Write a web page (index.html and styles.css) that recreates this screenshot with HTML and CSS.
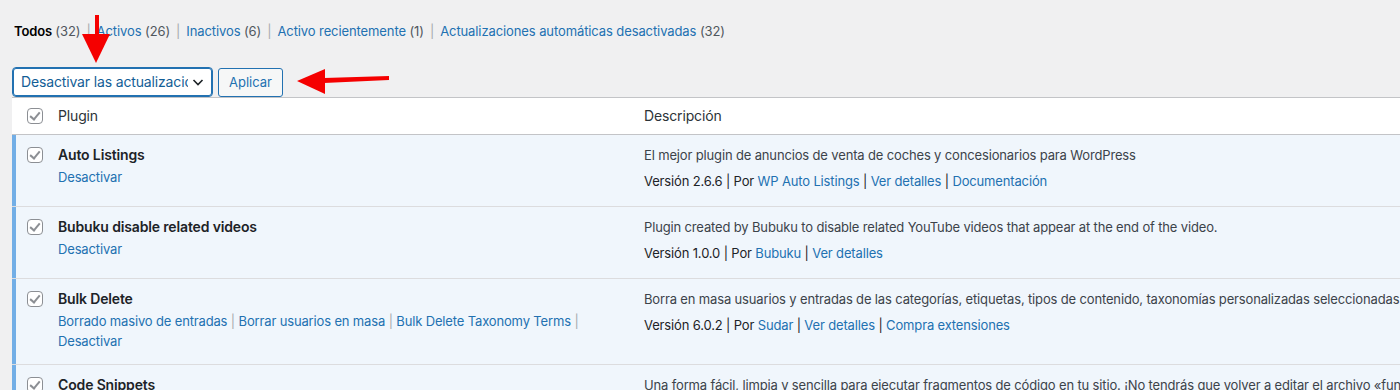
FILE: index.html
```html
<!DOCTYPE html>
<html lang="es">
<head>
<meta charset="utf-8">
<title>Plugins</title>
<link rel="stylesheet" href="styles.css">
</head>
<body>
<div class="wrap">

<ul class="subsubsub">
<li class="current">Todos <span class="count">(32)</span></li>
<li><a href="#">Activos</a> <span class="count">(26)</span></li>
<li><a href="#">Inactivos</a> <span class="count">(6)</span></li>
<li><a href="#">Activo recientemente</a> <span class="count">(1)</span></li>
<li><a href="#">Actualizaciones automáticas desactivadas</a> <span class="count">(32)</span></li>
</ul>

<div class="tablenav">
<div class="bulk-select">
<span class="bulk-value">Desactivar las actualizaciones automáticas</span>
<svg class="chevron" width="16" height="16" viewBox="0 0 16 16"><path d="M3.5 6 L8 10.5 L12.5 6" fill="none" stroke="#1d2327" stroke-width="1.6"/></svg>
</div>
<button class="button">Aplicar</button>
</div>

<div class="plugins">
<div class="row head">
<div class="check"><span class="cb"></span></div>
<div class="col-name">Plugin</div>
<div class="col-desc">Descripción</div>
</div>

<div class="row active">
<div class="check"><span class="cb"></span></div>
<div class="col-name">
<strong>Auto Listings</strong>
<div class="actions"><a href="#">Desactivar</a></div>
</div>
<div class="col-desc">
<p>El mejor plugin de anuncios de venta de coches y concesionarios para WordPress</p>
<p class="meta">Versión 2.6.6 | Por <a href="#">WP Auto Listings</a> | <a href="#">Ver detalles</a> | <a href="#">Documentación</a></p>
</div>
</div>

<div class="row active">
<div class="check"><span class="cb"></span></div>
<div class="col-name">
<strong>Bubuku disable related videos</strong>
<div class="actions"><a href="#">Desactivar</a></div>
</div>
<div class="col-desc">
<p>Plugin created by Bubuku to disable related YouTube videos that appear at the end of the video.</p>
<p class="meta">Versión 1.0.0 | Por <a href="#">Bubuku</a> | <a href="#">Ver detalles</a></p>
</div>
</div>

<div class="row active tall">
<div class="check"><span class="cb"></span></div>
<div class="col-name">
<strong>Bulk Delete</strong>
<div class="actions"><a href="#">Borrado masivo de entradas</a> <span class="sep">|</span> <a href="#">Borrar usuarios en masa</a> <span class="sep">|</span> <a href="#">Bulk Delete Taxonomy Terms</a> <span class="sep">|</span><br><a href="#">Desactivar</a></div>
</div>
<div class="col-desc">
<p>Borra en masa usuarios y entradas de las categorías, etiquetas, tipos de contenido, taxonomías personalizadas seleccionadas o por fecha.</p>
<p class="meta">Versión 6.0.2 | Por <a href="#">Sudar</a> | <a href="#">Ver detalles</a> | <a href="#">Compra extensiones</a></p>
</div>
</div>

<div class="row active">
<div class="check"><span class="cb"></span></div>
<div class="col-name">
<strong>Code Snippets</strong>
<div class="actions"><a href="#">Desactivar</a></div>
</div>
<div class="col-desc">
<p>Una forma fácil, limpia y sencilla para ejecutar fragmentos de código en tu sitio. ¡No tendrás que volver a editar el archivo «functions.php» de tu tema!</p>
</div>
</div>
</div>

</div>

<!-- red annotation arrows drawn on top of the screenshot -->
<svg class="arrow arrow-down" width="40" height="60" viewBox="0 0 40 60"><path d="M15 0 H19 V20 H15 Z" fill="#f50000"/><path d="M2 19 L30 19 L16 48 Z" fill="#f50000"/></svg>
<svg class="arrow arrow-left" width="100" height="40" viewBox="0 0 100 40"><path d="M28 8 L28 33 L0 20 Z" fill="#f50000"/><path d="M27 17 L92 15 L92 19 L27 22 Z" fill="#f50000"/></svg>
</body>
</html>
```

FILE: styles.css
```css
html, body { margin: 0; padding: 0; }
body {
  background: #f0f0f1;
  color: #3c434a;
  font-family: Inter, "Noto Sans", sans-serif;
  font-size: 13px;
  line-height: 1.4;
  letter-spacing: -0.15px;
  overflow: hidden;
}
a { color: #2271b1; text-decoration: none; }

.wrap { padding: 22px 0 0 12px; width: 1500px; }

.subsubsub { list-style: none; margin: 0 0 0 2px; padding: 0; display: flex; color: #646970; height: 22px; letter-spacing: -0.1px; }
.subsubsub li { white-space: nowrap; }
.subsubsub li + li::before { content: "|"; color: #a7aaad; margin: 0 6px; }
.subsubsub .current { color: #000; font-weight: 600; }
.subsubsub .count { color: #50575e; font-weight: 400; }

.tablenav { display: flex; align-items: center; gap: 5px; margin-top: 23px; height: 30px; }
.bulk-select {
  box-sizing: border-box;
  width: 201px; height: 30px;
  border: 1px solid #2271b1;
  border-radius: 4px;
  box-shadow: 0 0 0 1px #2271b1 inset;
  background: #fff;
  display: flex; align-items: center;
  padding: 0 6px 0 8px;
  color: #135e96;
  font-size: 14px;
}
.bulk-value { flex: 1; overflow: hidden; white-space: nowrap; }
.chevron { flex: none; margin-left: 2px; }
.button {
  box-sizing: border-box;
  height: 29px; padding: 0 10px;
  border: 1px solid #2271b1; border-radius: 3px;
  background: #f6f7f7; color: #2271b1;
  font: inherit; font-size: 13px;
}

.plugins { background: #fff; border-top: 1px solid #c3c4c7; }
.row { display: grid; grid-template-columns: 46px 586px 1fr; border-bottom: 1px solid #dcdcde; }
.row.head { border-bottom-color: #c3c4c7; height: 36px; align-items: center; color: #2c3338; font-size: 14px; }
.row.active { background: #f0f6fc; box-shadow: 4px 0 0 #72aee6 inset; height: 71px; }
.row.tall { height: 85px; }
.check { display: flex; padding-left: 15px; }
.row.active .check { padding-top: 12px; }
.cb {
  box-sizing: border-box; width: 16px; height: 16px;
  border: 1px solid #8c8f94; border-radius: 4px; background: #fff;
  position: relative;
}
.cb::after {
  content: ""; position: absolute; left: 4px; top: 1px;
  width: 4px; height: 8px;
  border: solid #8c8f94; border-width: 0 2px 2px 0;
  transform: rotate(40deg);
}
.col-name strong { display: block; color: #1d2327; font-size: 14px; font-weight: 600; }
.row.active .col-name { padding-top: 10px; }
.actions { margin-top: 2px; line-height: 20px; }
.actions .sep { color: #a7aaad; }
.col-desc { padding-left: 0; }
.row.active .col-desc { padding-top: 11px; white-space: nowrap; }
.col-desc p { margin: 0; }
.col-desc .meta { margin-top: 8px; color: #1d2327; }

.arrow { position: absolute; }
.arrow-down { left: 80px; top: 15px; }
.arrow-left { left: 297px; top: 61px; }
```
